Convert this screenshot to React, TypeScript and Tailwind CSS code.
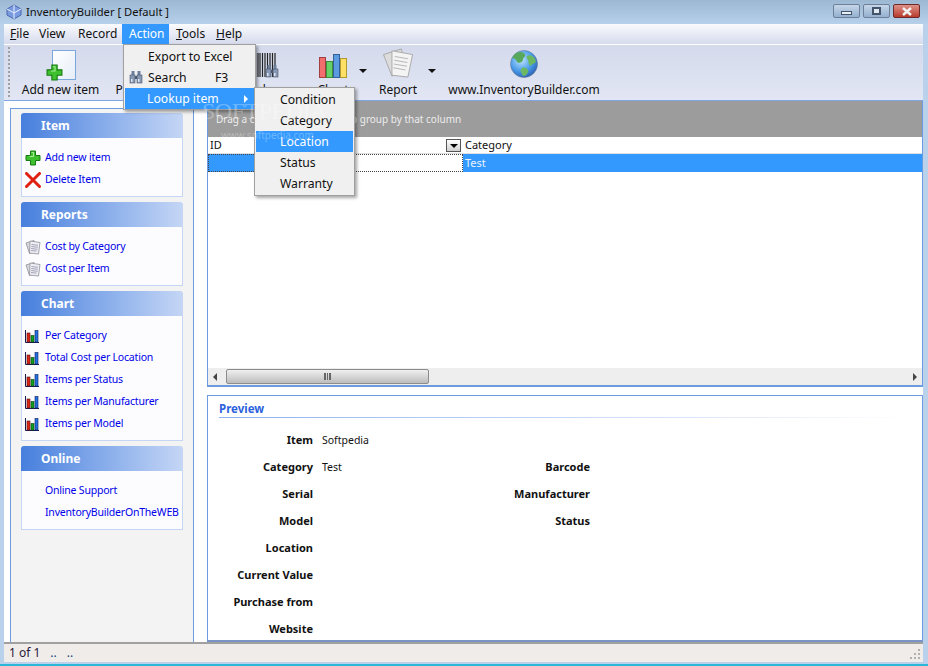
import type { ReactNode } from "react";

const font = "font-['Noto_Sans',Tahoma,sans-serif]";

function PlusIcon({ className }: { className?: string }) {
    return (
        <svg viewBox="0 0 16 16" className={className}>
            <path d="M5.500 1h5v4.500H15v5h-4.500V15h-5v-4.500H1v-5h4.500z" fill="#3fc02f" stroke="#167a12" strokeWidth="1" />
            <path d="M6.500 2.500h2v4h-4" fill="none" stroke="#a6ee98" strokeWidth="1" />
        </svg>
    );
}

function CrossIcon({ className }: { className?: string }) {
    return (
        <svg viewBox="0 0 16 16" className={className}>
            <path d="M1.500 1.500 14.500 14.500M14.500 1.500 1.500 14.500" stroke="#e02010" strokeWidth="3" strokeLinecap="round" />
        </svg>
    );
}

function PagesIcon({ className }: { className?: string }) {
    return (
        <svg viewBox="0 0 16 16" className={className}>
            <path d="M1 4 9 1.500l1.500 11-6 2z" fill="#d8d8de" stroke="#8f8f98" strokeWidth="0.800" />
            <path d="M5 2 15 3.500 13.500 15 4.500 14z" fill="#eeeef4" stroke="#8f8f98" strokeWidth="0.800" />
            <path d="M6.500 5.500l6.500 .8M6.300 7.500l6.500 .8M6.100 9.500l6.500 .8M6 11.500l5.500 .6" stroke="#8f8fa8" strokeWidth="0.800" />
        </svg>
    );
}

function SmallChartIcon({ className }: { className?: string }) {
    return (
        <svg viewBox="0 0 14 14" className={className}>
            <path d="M0.500 1v12.500H14" fill="none" stroke="#1a1a50" strokeWidth="1" />
            <rect x="2" y="4" width="3" height="9" fill="#e02818" stroke="#501010" strokeWidth="0.600" />
            <rect x="6" y="6.500" width="3" height="6.500" fill="#10a020" stroke="#104010" strokeWidth="0.600" />
            <rect x="10" y="1.500" width="3" height="11.500" fill="#2070e0" stroke="#102060" strokeWidth="0.600" />
        </svg>
    );
}

function BigChartIcon() {
    return (
        <svg viewBox="0 0 28 24" className="w-[28px] h-[24px]">
            <rect x="0.500" y="3.500" width="6" height="20" fill="#f26d6d" stroke="#a04040" />
            <rect x="7.500" y="7.500" width="6" height="16" fill="#66d166" stroke="#3d8f3d" />
            <rect x="14.500" y="0.500" width="6" height="23" fill="#5b9be0" stroke="#33609a" />
            <rect x="21.500" y="4.500" width="6" height="19" fill="#ffe066" stroke="#b09a30" />
        </svg>
    );
}

function BigReportIcon() {
    return (
        <svg viewBox="0 0 34 32" className="w-[33px] h-[30px]">
            <path d="M1 7 20 1l6 22-16 7z" fill="#dcdcdc" stroke="#a8a8a8" />
            <path d="M10 3 32 7l-5 24-17-2z" fill="#f4f4f4" stroke="#a8a8a8" />
            <path d="M13 9l14 2.500M12.500 13l14 2.500M12 17l14 2.500M11.500 21l13 2.500" stroke="#b8b8b8" strokeWidth="1.200" />
        </svg>
    );
}

function GlobeIcon() {
    return (
        <svg viewBox="0 0 28 28" className="w-[28px] h-[28px]">
            <defs>
                <radialGradient id="sea" cx="40%" cy="35%" r="70%">
                    <stop offset="0%" stopColor="#bfe4ff" />
                    <stop offset="60%" stopColor="#4a9be8" />
                    <stop offset="100%" stopColor="#2a5fb0" />
                </radialGradient>
            </defs>
            <circle cx="14" cy="14" r="13.500" fill="url(#sea)" stroke="#6a7a98" strokeWidth="0.600" />
            <path d="M7 2.500c4-1.500 7 0 8 2 1 2-2 3-2 5s-3 4-5 3-2-4-4-4-2-1-1-2 2-3 4-4z" fill="#58a85c" />
            <path d="M17 6c3-2 7 0 8.500 4s-3 3-4 5-3 0-3-3-3-4-1.500-6zM12 18c2-1 5 0 6 2s-2 6-4 6-2-3-3-4 0-3 1-4z" fill="#6cb862" />
        </svg>
    );
}

function BinocularsIcon({ className }: { className?: string }) {
    return (
        <svg viewBox="0 0 14 14" className={className}>
            <rect x="2.500" y="1" width="3" height="4" fill="#6c7f9c" />
            <rect x="8.500" y="1" width="3" height="4" fill="#6c7f9c" />
            <rect x="1" y="5" width="5" height="8" fill="#8798b3" stroke="#4a5870" strokeWidth="0.600" />
            <rect x="8" y="5" width="5" height="8" fill="#8798b3" stroke="#4a5870" strokeWidth="0.600" />
            <rect x="6" y="6" width="2" height="3" fill="#4a5870" />
            <rect x="2" y="9" width="1.500" height="3" fill="#dfe5ee" />
            <rect x="9" y="9" width="1.500" height="3" fill="#dfe5ee" />
        </svg>
    );
}

function BarcodeIcon() {
    return (
        <div className="relative w-[25px] h-[25px] ml-[2px]">
            <svg viewBox="0 0 25 24" className="w-[25px] h-[24px]">
                <path d="M1 0v24M3.500 0v24M6 0v24M8 0v24M10.500 0v24M13 0v24M15.500 0v24M18 0v24M20.500 0v24M23 0v24" stroke="#222" strokeWidth="1.200" />
            </svg>
            <BinocularsIcon className="absolute right-[-2px] bottom-0 w-[14px] h-[14px]" />
        </div>
    );
}

function ToolButton({ icon, label, caret, className }: { icon: ReactNode; label: string; caret?: boolean; className: string }) {
    return (
        <div className={`relative flex flex-col items-center shrink-0 pt-px ${className}`}>
            <div className="h-[32px] flex items-end justify-center">{icon}</div>
            <span className="mt-[3px] text-[12px] leading-[17px] text-[#111] whitespace-nowrap">{label}</span>
            {caret && <span className="absolute right-[-19px] top-[24px] w-0 h-0 border-x-[4px] border-x-transparent border-t-[4px] border-t-[#111]" />}
        </div>
    );
}

function TaskPanel({ title, children, bodyClass }: { title: string; children: ReactNode; bodyClass: string }) {
    return (
        <div className="w-[162px]">
            <div className="h-[25px] pt-px rounded-t-[3px] bg-gradient-to-r from-[#477fdd] to-[#c5d6f5] pl-[20px] flex items-center text-[12px] font-bold text-white">
                {title}
            </div>
            <div className={`bg-[#fcfcff] border border-t-0 border-[#c5d6f5] flex flex-col ${bodyClass}`}>{children}</div>
        </div>
    );
}

function TaskLink({ icon, label }: { icon?: ReactNode; label: string }) {
    return (
        <div className="h-[22px] flex items-center">
            <div className="w-[23px] pl-[3px] flex items-center shrink-0">{icon}</div>
            <span className="text-[10.500px] text-[#0000e8] whitespace-nowrap tracking-[-0.2px]">{label}</span>
        </div>
    );
}

function PreviewRow({ label, value, label2 }: { label: string; value?: string; label2?: string }) {
    return (
        <div className="h-[27px] flex items-center text-[#111]">
            <span className="w-[105px] text-right text-[11px] font-bold whitespace-nowrap">{label}</span>
            <span className="w-[170px] pl-[9px] text-[10.500px]">{value}</span>
            <span className="w-[107px] text-right text-[11px] font-bold whitespace-nowrap">{label2}</span>
        </div>
    );
}

function MenuEntry({ label, active, hint, icon, arrow, indent }: { label: string; active?: boolean; hint?: string; icon?: ReactNode; arrow?: boolean; indent: string }) {
    return (
        <div className={`relative h-[21px] pt-[2px] flex items-center text-[12.200px] ${indent} ${active ? "bg-[#3399ff] text-white" : "text-[#111]"}`}>
            {icon && <span className="absolute left-[4px] top-[3px]">{icon}</span>}
            <span>{label}</span>
            {hint && <span className="absolute left-[90px]">{hint}</span>}
            {arrow && <span className="absolute right-[6px] top-[7px] w-0 h-0 border-y-[4px] border-y-transparent border-l-[4px] border-l-white" />}
        </div>
    );
}

export default function App() {
    return (
        <div className={`relative w-[928px] h-[666px] overflow-hidden flex flex-col bg-[#b9d1ea] ${font}`}>
            {/* Title bar */}
            <div className="h-[24px] shrink-0 flex items-center bg-gradient-to-b from-[#9db8d3] to-[#b6d0ea] pl-[6px] pr-[8px]">
                <svg viewBox="0 0 16 16" className="w-[16px] h-[16px] shrink-0">
                    <path d="M8 1 15 5v6l-7 4-7-4V5z" fill="#7a9be0" stroke="#4a68b0" />
                    <path d="M8 1v14M1 5l7 4 7-4" stroke="#e8f0ff" fill="none" />
                </svg>
                <span className="ml-[4px] text-[11.200px] text-[#111]">InventoryBuilder [ Default ]</span>
                <div className="ml-auto flex gap-[3px] mt-[-2px]">
                    <div className="w-[27px] h-[14px] rounded-[2px] border border-[#6f7f98] bg-gradient-to-b from-[#c6d6e8] to-[#93b0cf] flex items-end justify-center pb-[2px]">
                        <div className="w-[11px] h-[4px] bg-[#e8eef5] border border-[#44546a]" />
                    </div>
                    <div className="w-[27px] h-[14px] rounded-[2px] border border-[#6f7f98] bg-gradient-to-b from-[#c6d6e8] to-[#93b0cf] flex items-center justify-center">
                        <div className="w-[9px] h-[8px] bg-[#dfe7f0] border-2 border-[#44546a]" />
                    </div>
                    <div className="w-[27px] h-[14px] rounded-[2px] border border-[#6d2a28] bg-gradient-to-b from-[#dd9088] to-[#b63a2c] flex items-center justify-center">
                        <svg viewBox="0 0 12 9" className="w-[12px] h-[9px]">
                            <path d="M2 1 10 8M10 1 2 8" stroke="#f2f2f2" strokeWidth="2.400" />
                        </svg>
                    </div>
                </div>
            </div>

            <div className="flex-1 min-h-0 flex flex-col ml-[4px] mr-[5px]">
                {/* Menu bar */}
                <div className="h-[20px] shrink-0 flex bg-gradient-to-b from-[#fafbfd] via-[#e8ebf5] to-[#d5dbed] text-[12px] text-[#111]">
                    <span className="pl-[6px] w-[35px] leading-[20px]"><u>F</u>ile</span>
                    <span className="w-[39px] leading-[20px]">View</span>
                    <span className="w-[44px] leading-[20px]">Record</span>
                    <span className="w-[47px] pl-[7px] bg-[#3399ff] text-white leading-[20px]">Action</span>
                    <span className="w-[47px] pl-[7px] leading-[20px]"><u>T</u>ools</span>
                    <span className="leading-[20px]"><u>H</u>elp</span>
                </div>

                {/* Toolbar */}
                <div className="h-[57px] shrink-0 flex border-t border-white border-b border-b-[#7ea6e0] bg-gradient-to-b from-[#d4daec] to-[#e2e6f4]">
                    <div className="w-[4px] ml-[4px] mt-[2px] h-[50px] border-l-2 border-dotted border-[#a0a0a0] shrink-0" />
                    <ToolButton
                        className="ml-[9px] w-[79px]"
                        label="Add new item"
                        icon={
                            <div className="relative w-[24px] h-[30px] ml-[6px] mb-[-2px] bg-gradient-to-br from-white to-[#e6eef8] border border-[#7aa7dc]">
                                <PlusIcon className="absolute left-[-7px] bottom-[-2px] w-[17px] h-[17px]" />
                            </div>
                        }
                    />
                    <ToolButton className="ml-[14px] w-[30px]" label="Print" icon={null} />
                    <ToolButton className="ml-[96px] w-[46px]" label="Lookup" icon={<BarcodeIcon />} />
                    <ToolButton className="ml-[32px] w-[30px]" label="Chart" caret icon={<BigChartIcon />} />
                    <ToolButton className="ml-[31px] w-[38px]" label="Report" caret icon={<BigReportIcon />} />
                    <ToolButton className="ml-[31px] w-[152px]" label="www.InventoryBuilder.com" icon={<GlobeIcon />} />
                </div>

                {/* Main area */}
                <div className="flex-1 min-h-0 flex bg-white">
                    {/* Sidebar */}
                    <div className="w-[203px] shrink-0 pl-[6px] pr-[13px] pt-[7px] bg-white">
                        <div className="h-full border-x border-t border-[#6d9be0] bg-[#f3f3f3] pt-[4px] pl-[10px] flex flex-col gap-[5px]">
                            <TaskPanel title="Item" bodyClass="h-[59px] pt-[9px]">
                                <TaskLink icon={<PlusIcon className="w-[16px] h-[16px]" />} label="Add new item" />
                                <TaskLink icon={<CrossIcon className="w-[16px] h-[16px]" />} label="Delete Item" />
                            </TaskPanel>
                            <TaskPanel title="Reports" bodyClass="h-[59px] pt-[9px]">
                                <TaskLink icon={<PagesIcon className="w-[16px] h-[16px]" />} label="Cost by Category" />
                                <TaskLink icon={<PagesIcon className="w-[16px] h-[16px]" />} label="Cost per Item" />
                            </TaskPanel>
                            <TaskPanel title="Chart" bodyClass="h-[125px] pt-[9px]">
                                <TaskLink icon={<SmallChartIcon className="w-[14px] h-[14px]" />} label="Per Category" />
                                <TaskLink icon={<SmallChartIcon className="w-[14px] h-[14px]" />} label="Total Cost per Location" />
                                <TaskLink icon={<SmallChartIcon className="w-[14px] h-[14px]" />} label="Items per Status" />
                                <TaskLink icon={<SmallChartIcon className="w-[14px] h-[14px]" />} label="Items per Manufacturer" />
                                <TaskLink icon={<SmallChartIcon className="w-[14px] h-[14px]" />} label="Items per Model" />
                            </TaskPanel>
                            <TaskPanel title="Online" bodyClass="h-[59px] pt-[9px]">
                                <TaskLink label="Online Support" />
                                <TaskLink label="InventoryBuilderOnTheWEB" />
                            </TaskPanel>
                        </div>
                    </div>

                    {/* Content */}
                    <div className="flex-1 min-w-0 flex flex-col gap-[8px]">
                        {/* Grid */}
                        <div className="h-[286px] shrink-0 flex flex-col border-x border-b-2 border-[#6d9be0]">
                            <div className="h-[36px] bg-[#9c9c9c] pl-[8px] flex items-center text-[10px] text-[#ececec]">
                                Drag a column header here to group by that column
                            </div>
                            <div className="h-[17px] pt-px flex items-center text-[11px] text-[#111] bg-white border-b border-[#e0e0e0]">
                                <span className="w-[238px] pl-[2px]">ID</span>
                                <span className="w-[15px] h-[13px] border border-[#555] bg-gradient-to-b from-white to-[#d0d0d0] flex items-center justify-center">
                                    <span className="w-0 h-0 border-x-[4px] border-x-transparent border-t-[4px] border-t-black" />
                                </span>
                                <span className="ml-[4px]">Category</span>
                            </div>
                            <div className="h-[18px] flex items-center text-[11px] text-[#e8f2ff]">
                                <div className="w-[48px] h-full bg-[#3399ff] border-y border-l border-dotted border-[#444]" />
                                <div className="w-[207px] h-full bg-white border-y border-r border-dotted border-[#444]" />
                                <div className="flex-1 h-full bg-[#3399ff] pl-[2px] leading-[17px]">Test</div>
                            </div>
                            <div className="flex-1" />
                            <div className="h-[17px] flex items-center bg-[#eeeeee] relative">
                                <span className="ml-[5px] w-0 h-0 border-y-[4px] border-y-transparent border-r-[4px] border-r-[#444]" />
                                <div className="ml-[9px] w-[203px] h-[15px] rounded-[2px] border border-[#8c8c8c] bg-gradient-to-b from-[#f0f0f0] to-[#bdbdbd] flex items-center justify-center">
                                    <div className="w-[7px] h-[7px] border-x-2 border-[#666] bg-[linear-gradient(90deg,transparent_40%,#666_40%,#666_60%,transparent_60%)]" />
                                </div>
                                <span className="ml-auto mr-[5px] w-0 h-0 border-y-[4px] border-y-transparent border-l-[4px] border-l-[#444]" />
                            </div>
                        </div>

                        {/* Preview */}
                        <div className="flex-1 min-h-0 border-x border-t border-b-2 border-[#6d9be0] border-b-[#7b93c4] px-[11px] overflow-hidden">
                            <div className="mt-[5px] h-[16px] text-[11.500px] font-bold text-[#2c62dc] leading-[15px]">Preview</div>
                            <div className="h-px bg-gradient-to-r from-[#8eb0ee] to-white" />
                            <div className="mt-[9px] ml-[-11px]">
                                <PreviewRow label="Item" value="Softpedia" />
                                <PreviewRow label="Category" value="Test" label2="Barcode" />
                                <PreviewRow label="Serial" label2="Manufacturer" />
                                <PreviewRow label="Model" label2="Status" />
                                <PreviewRow label="Location" />
                                <PreviewRow label="Current Value" />
                                <PreviewRow label="Purchase from" />
                                <PreviewRow label="Website" />
                            </div>
                        </div>
                    </div>
                </div>

                {/* Status bar */}
                <div className="relative h-[20px] shrink-0 flex items-center gap-[10px] border-t-2 border-[#a0a0a0] bg-[#f0ecea] pl-[5px] text-[12px] text-[#2a1a3a]">
                    <span>1 of 1</span>
                    <span className="text-[#14487c]">..</span>
                    <span className="text-[#14487c]">..</span>
                    <svg viewBox="0 0 12 12" className="absolute right-[2px] bottom-[2px] w-[12px] h-[12px]">
                        <path d="M9 1h2v2H9zM5 5h2v2H5zM9 5h2v2H9zM1 9h2v2H1zM5 9h2v2H5zM9 9h2v2H9z" fill="#b0b0b0" />
                    </svg>
                </div>
            </div>
            <div className="h-[4px] shrink-0 border-t-2 border-[#b9d1ea] bg-[#2bb8d8]" />

            {/* Action dropdown */}
            <div className="absolute left-[123px] top-[44px] w-[133px] h-[66px] bg-[#f0f0f0] border border-[#a0a0a0] p-px shadow-[2px_2px_3px_rgba(0,0,0,0.35)]">
                <MenuEntry label="Export to Excel" indent="pl-[23px]" />
                <MenuEntry label="Search" hint="F3" indent="pl-[23px]" icon={<BinocularsIcon className="w-[14px] h-[14px] block" />} />
                <MenuEntry label="Lookup item" active arrow indent="pl-[22px]" />
            </div>

            {/* Lookup submenu */}
            <div className="absolute left-[254px] top-[87px] w-[101px] h-[109px] bg-[#f0f0f0] border border-[#a0a0a0] p-px shadow-[2px_2px_3px_rgba(0,0,0,0.35)]">
                <MenuEntry label="Condition" indent="pl-[24px]" />
                <MenuEntry label="Category" indent="pl-[24px]" />
                <MenuEntry label="Location" active indent="pl-[24px]" />
                <MenuEntry label="Status" indent="pl-[24px]" />
                <MenuEntry label="Warranty" indent="pl-[24px]" />
            </div>

            {/* Watermark */}
            <div className="absolute left-[202px] top-[98px] text-[24px] leading-[26px] font-['Liberation_Serif',serif] text-white/30 tracking-[-0.5px] pointer-events-none">SOFTPEDIA</div>
            <div className="absolute left-[221px] top-[129px] text-[10px] leading-[12px] text-white/30 pointer-events-none">www.softpedia.com</div>
        </div>
    );
}
